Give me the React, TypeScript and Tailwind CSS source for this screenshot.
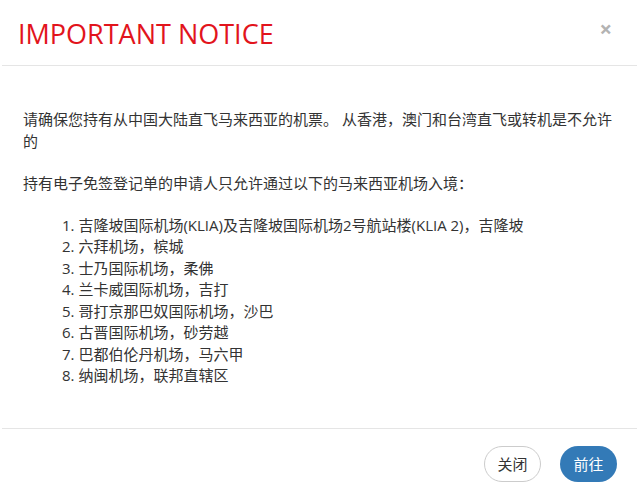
import React from "react";

const items = [
  "吉隆坡国际机场(KLIA)及吉隆坡国际机场2号航站楼(KLIA 2)，吉隆坡",
  "六拜机场，槟城",
  "士乃国际机场，柔佛",
  "兰卡威国际机场，吉打",
  "哥打京那巴奴国际机场，沙巴",
  "古晋国际机场，砂劳越",
  "巴都伯伦丹机场，马六甲",
  "纳闽机场，联邦直辖区",
];

export default function App() {
  return (
    <div
      className="w-[639px] h-[499px] bg-white flex flex-col text-[#333] overflow-hidden"
      style={{ fontFamily: '"Open Sans", "Noto Sans CJK SC", sans-serif' }}
    >
      <div className="h-[66px] shrink-0 border-b border-[#e5e5e5] mx-[2px] flex items-center justify-between pl-[16px] pr-[25px]">
        <h1 className="text-[27px] leading-none text-[#e2141c] font-normal pt-[2px]">
          IMPORTANT NOTICE
        </h1>
        <button className="text-[#b3b3b3] text-[22px] leading-none font-bold -mt-[10px]">×</button>
      </div>
      <div className="flex-1 pl-[23px] pr-[23px] pt-[43px] text-[15px] leading-[21.5px]">
        <p>请确保您持有从中国大陆直飞马来西亚的机票。 从香港，澳门和台湾直飞或转机是不允许的</p>
        <p className="mt-[21px]">持有电子免签登记单的申请人只允许通过以下的马来西亚机场入境：</p>
        <ol className="mt-[20px] pl-[39px]">
          {items.map((t, i) => (
            <li key={i}>
              {i + 1}. {t}
            </li>
          ))}
        </ol>
      </div>
      <div className="h-[71px] shrink-0 border-t border-[#e5e5e5] mx-[2px] flex items-center justify-end gap-[19px] pr-[20px]">
        <button className="h-[36px] w-[57px] rounded-full border border-[#cccccc] bg-white text-[15px] text-[#333]">
          关闭
        </button>
        <button className="h-[36px] w-[57px] rounded-full bg-[#337ab7] text-[15px] text-white">
          前往
        </button>
      </div>
    </div>
  );
}
